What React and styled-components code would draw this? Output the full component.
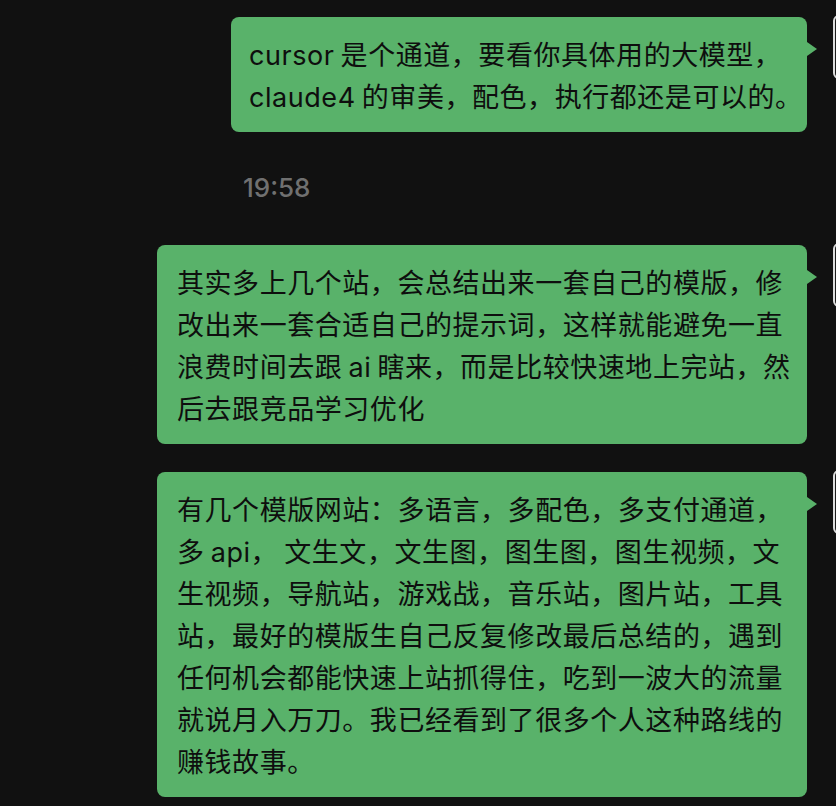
import React from "react";
import styled, { createGlobalStyle } from "styled-components";

const GlobalStyle = createGlobalStyle`
  html, body {
    margin: 0;
    padding: 0;
    background: #111111;
  }
  body {
    font-family: "Inter", "Noto Sans CJK SC", sans-serif;
  }
`;

const Chat = styled.div`
  width: 836px;
  height: 806px;
  overflow: hidden;
  padding-top: 17px;
  box-sizing: border-box;
  background: #111111;
  display: flex;
  flex-direction: column;
`;

const Row = styled.div`
  display: flex;
  justify-content: flex-end;
  align-items: flex-start;
  margin-right: -61px;
  margin-bottom: ${(p) => p.gap || 0}px;
`;

const Bubble = styled.div`
  position: relative;
  box-sizing: border-box;
  width: ${(p) => p.width}px;
  padding: 18px 14px 13px ${(p) => p.padLeft || 18}px;
  background: #59b26a;
  border-radius: 8px;
  color: #0e0e0e;
  font-size: 27px;
  line-height: 42px;
  letter-spacing: 0.55px;
  word-spacing: -2px;
  white-space: nowrap;

  &::after {
    content: "";
    position: absolute;
    right: -10px;
    top: 25px;
    border-left: 10px solid #59b26a;
    border-top: 7.5px solid transparent;
    border-bottom: 7.5px solid transparent;
  }
`;

const Line = styled.span`
  display: block;
`;

const Avatar = styled.div`
  flex-shrink: 0;
  width: 64px;
  height: 64px;
  margin-left: 26px;
  margin-top: -2px;
  box-sizing: border-box;
  border: 2px solid #dcdcdc;
  border-radius: 6px;
  background: #1b1b1b;
`;

const Time = styled.div`
  padding-left: 243px;
  margin: 41px 0 42px;
  height: 30px;
  line-height: 30px;
  font-size: 26px;
  font-weight: 500;
  color: #707070;
`;

const messages = [
  {
    width: 576,
    padLeft: 18,
    lines: [
      "cursor 是个通道，要看你具体用的大模型，",
      "claude4 的审美，配色，执行都还是可以的。",
    ],
  },
  {
    width: 650,
    padLeft: 20,
    gap: 28,
    lines: [
      "其实多上几个站，会总结出来一套自己的模版，修",
      "改出来一套合适自己的提示词，这样就能避免一直",
      "浪费时间去跟 ai 瞎来，而是比较快速地上完站，然",
      "后去跟竞品学习优化",
    ],
  },
  {
    width: 650,
    padLeft: 20,
    lines: [
      "有几个模版网站：多语言，多配色，多支付通道，",
      "多 api， 文生文，文生图，图生图，图生视频，文",
      "生视频，导航站，游戏战，音乐站，图片站，工具",
      "站，最好的模版生自己反复修改最后总结的，遇到",
      "任何机会都能快速上站抓得住，吃到一波大的流量",
      "就说月入万刀。我已经看到了很多个人这种路线的",
      "赚钱故事。",
    ],
  },
];

function Message({ msg }) {
  return (
    <Row gap={msg.gap}>
      <Bubble width={msg.width} padLeft={msg.padLeft}>
        {msg.lines.map((l, i) => (
          <Line key={i}>{l}</Line>
        ))}
      </Bubble>
      <Avatar />
    </Row>
  );
}

export default function App() {
  return (
    <>
      <GlobalStyle />
      <Chat>
        <Message msg={messages[0]} />
        <Time>19:58</Time>
        <Message msg={messages[1]} />
        <Message msg={messages[2]} />
      </Chat>
    </>
  );
}
